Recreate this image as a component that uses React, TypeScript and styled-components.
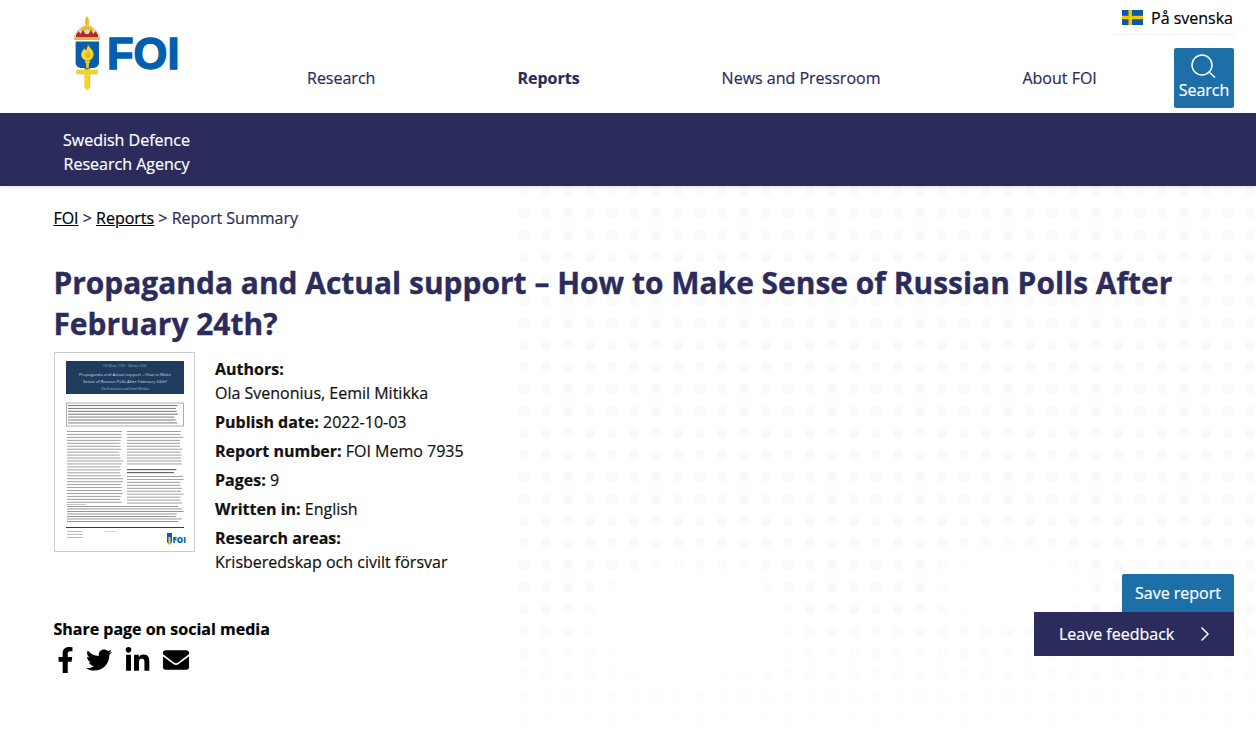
import React from "react";
import styled, { createGlobalStyle } from "styled-components";
import { FaFacebookF, FaTwitter, FaLinkedinIn, FaEnvelope } from "react-icons/fa";

const NAVY = "#2c2c5c";
const BLUE = "#1d6fa8";

const Global = createGlobalStyle`
  html, body { margin: 0; padding: 0; background: #fff; }
  body {
    font-family: "Open Sans", "Liberation Sans", sans-serif;
    font-size: 16px;
    line-height: 24px;
    color: #111;
    -webkit-text-stroke: 0.2px currentColor;
  }
  * { box-sizing: border-box; }
`;

const Page = styled.div`
  width: 1256px;
  height: 742px;
  overflow: hidden;
`;

const Header = styled.header`
  display: flex;
  height: 113px;
  padding: 0 22px 0 74px;
  background: #fff;
`;

const LogoBox = styled.a`
  display: block;
  flex: none;
  width: 106px;
  height: 74px;
  margin-top: 16px;
  svg { display: block; }
`;

const HeaderRight = styled.div`
  flex: 1;
  display: flex;
  flex-direction: column;
  align-items: flex-end;
`;

const LangLink = styled.a`
  display: flex;
  align-items: center;
  gap: 8px;
  height: 35px;
  width: 122px;
  padding: 4px 0 3px 10px;
  border-bottom: 1px solid #f0f0f0;
  color: #000;
  white-space: nowrap;
`;

const NavRow = styled.nav`
  align-self: stretch;
  display: flex;
  align-items: center;
  margin-top: 13px;
  padding-left: 127px;
`;

const NavLink = styled.a<{ $active?: boolean }>`
  margin-right: 142px;
  color: ${NAVY};
  font-weight: ${(p) => (p.$active ? 700 : 400)};
  white-space: nowrap;
  &:nth-child(4) { margin-right: 0; }
`;

const SearchButton = styled.button`
  margin-left: auto;
  width: 60px;
  height: 60px;
  padding: 6px 0 0;
  border: 0;
  border-radius: 2px;
  background: ${BLUE};
  color: #fff;
  font: 500 16px/24px "Open Sans", sans-serif;
  display: flex;
  flex-direction: column;
  align-items: center;
  svg { display: block; }
`;

const Band = styled.div`
  height: 73px;
  padding: 15px 0 0 63px;
  background: ${NAVY};
  color: #fff;
  box-shadow: 0 1px 3px rgba(0, 0, 0, 0.12);
  position: relative;
`;

const BandText = styled.div`
  width: 127px;
  text-align: center;
  white-space: nowrap;
  font-weight: 500;
`;

const Main = styled.main`
  height: 556px;
  padding: 20px 22px 0 54px;
  background-color: #fff;
  background-image:
    radial-gradient(ellipse 120px 70px at 690px 440px, #fff 70%, #fff0 100%),
    radial-gradient(ellipse 90px 50px at 1010px 400px, #fff 60%, #fff0 100%),
    linear-gradient(#fff0 75%, #fff 100%),
    linear-gradient(90deg, #fff 513px, #fff0 513px),
    radial-gradient(circle at 11px 11px, #fafafa 0, #fafafa 5px, #fff0 5.6px);
  background-size: 100% 100%, 100% 100%, 100% 100%, 100% 100%, 22px 22px;
  background-position: 0 0, 0 0, 0 0, 0 0, 513px -6px;
`;

const Crumbs = styled.div`
  color: ${NAVY};
  height: 24px;
  margin-left: -0.6px;
  a { color: #000; text-decoration: underline; }
`;

const Title = styled.h1`
  margin: 32px 0 8px -0.6px;
  font-size: 29.95px;
  line-height: 41px;
  font-weight: 700;
  color: ${NAVY};
  -webkit-text-stroke: 0.35px currentColor;
`;

const ReportRow = styled.section`
  display: flex;
  gap: 20px;
  align-items: flex-start;
`;

const Cover = styled.div`
  flex: none;
  width: 141px;
  height: 200px;
  border: 1px solid #ccc;
  background: #fff;
  svg { display: block; }
`;

const Details = styled.div`
  padding-top: 5px;
  color: #111;
`;

const Detail = styled.div`
  margin-bottom: 5px;
  &:last-child { margin-bottom: 0; }
  strong { font-weight: 700; }
`;

const FootRow = styled.div`
  display: flex;
  justify-content: space-between;
  align-items: flex-start;
`;

const Share = styled.div`
  padding-top: 43px;
  margin-left: -0.6px;
`;

const ShareTitle = styled.div`
  font-weight: 700;
  color: #000;
`;

const ShareIcons = styled.div`
  display: flex;
  align-items: center;
  gap: 12px;
  margin-top: 6px;
  margin-left: 3.6px;
  color: #000;
  height: 26px;
`;

const FacebookIcon = styled(FaFacebookF)`
  width: 17px;
  height: 26px;
`;

const Actions = styled.div`
  display: flex;
  flex-direction: column;
  align-items: flex-end;
`;

const SaveButton = styled.button`
  width: 112px;
  height: 38px;
  border: 0;
  border-radius: 2px 2px 0 0;
  background: ${BLUE};
  color: #fff;
  font: 500 16px/24px "Open Sans", sans-serif;
`;

const FeedbackButton = styled.button`
  width: 200px;
  height: 44px;
  border: 0;
  padding: 0 24px 0 25px;
  background: ${NAVY};
  color: #fff;
  font: 500 16px/24px "Open Sans", sans-serif;
  display: flex;
  align-items: center;
  justify-content: space-between;
`;

const Flag = () => (
  <svg width="21" height="15" viewBox="0 0 21 15">
    <rect width="21" height="15" fill="#0b5aa6" />
    <rect x="6.500" width="3.500" height="15" fill="#f6c700" />
    <rect y="5.800" width="21" height="3.400" fill="#f6c700" />
  </svg>
);

const Logo = () => (
  <svg width="106" height="74" viewBox="0 0 106 74">
    {/* sword */}
    <path d="M10.700 50h5.300v4h7.700v4H16v13.500L13.300 74l-2.600-2.500V58H2.700v-4h8z" fill="#f5d327" stroke="#d9b51a" strokeWidth=".4" />
    {/* crown tip */}
    <path d="M13 0c1.600 2.500 2.600 4.500 2.200 6.500l-.6 3.500h-3l-.6-3.500C10.600 4.500 11.500 2.500 13 0z" fill="#eebd2c" />
    {/* crown */}
    <path d="M3 15c2-4 7-6 10-6s8 2 10 6l3 4v5H0v-5z" fill="#dcd8ca" />
    <path d="M6 14c2-3 5-4.500 7-4.500S18 11 20 14l-2 1.500-5-2-5 2z" fill="#e3bb2e" />
    <path d="M2 19l2.500-4 2 3 2.500-4 2.500 4h3l2.500-4 2.500 4 2-3 2.500 4v2H2z" fill="#b52a25" />
    <rect x="0.500" y="21" width="25" height="3" fill="#e3bb2e" />
    {/* shield */}
    <path d="M1.600 25.500H25v21c0 3-2.500 5.500-6 5.500h-1.500c-2 0-3.500 1-4.200 2-.7-1-2.300-2-4.300-2H7.500C4 52 1.600 49.500 1.600 46.500z" fill="#0b5cab" />
    {/* torch */}
    <path d="M13.500 28c1 3 6 5.500 6 10.500 0 3.500-2.500 6-6 6s-6.300-2.500-6.300-6c0-2.700 1.800-4 3-6 1 .8 1.500 1.500 1.500 2.500.8-2 1.800-4 2.800-7z" fill="#f7d925" />
    <path d="M11.500 38c1-1.500 2-2 2.500-4 1 2 2.500 3 2.500 5s-1 3-3 3-2-2.500-2-4z" fill="#c9a91a" opacity=".6" />
    <path d="M10.500 44.500h6l-1.300 3h-3.400zM12 47.500h3l-.4 5h-2.200z" fill="#f3c81f" />
    {/* wordmark */}
    <text x="33" y="53" fontFamily="'Liberation Sans', sans-serif" fontWeight="700" fontSize="44" fill="#005fae" stroke="#005fae" strokeWidth="1.400" textLength="72.500" lengthAdjust="spacingAndGlyphs">FOI</text>
  </svg>
);

const SearchIcon = () => (
  <svg width="26" height="24" viewBox="0 0 26 24" fill="none" stroke="#fff" strokeWidth="1.500">
    <circle cx="11" cy="11" r="10" />
    <path d="M18 18l6 5.500" />
  </svg>
);

const Chevron = () => (
  <svg width="10" height="16" viewBox="0 0 10 16" fill="none" stroke="#fff" strokeWidth="1.500">
    <path d="M1.500 1.500L8 8l-6.500 6.500" />
  </svg>
);

const pseudo = (seed: number) => {
  const x = Math.sin(seed * 12.9898) * 43758.5453;
  return x - Math.floor(x);
};

const TextLines = ({ x, y, width, count, step = 2.95, h = 1, fill = "#a0a0a0", seed = 1 }: { x: number; y: number; width: number; count: number; step?: number; h?: number; fill?: string; seed?: number }) => (
  <g fill={fill}>
    {Array.from({ length: count }, (_, i) => (
      <rect key={i} x={x} y={y + i * step} width={width * (0.93 + 0.07 * pseudo(seed + i))} height={h} />
    ))}
  </g>
);

const CoverArt = () => (
  <svg width="139" height="198" viewBox="0 0 139 198">
    <rect x="11" y="8" width="118" height="33" fill="#1f3b5e" />
    <g fontFamily="'Open Sans', sans-serif" textAnchor="middle" fill="#cfd8e2" strokeWidth="0">
      <text x="70" y="14" fontSize="3" fill="#9fb0c2">FOI Memo 7935 · Oktober 2022</text>
      <text x="70" y="23" fontSize="4.200">Propaganda and Actual support – How to Make</text>
      <text x="70" y="30" fontSize="4.200">Sense of Russian Polls After February 24th?</text>
      <text x="70" y="37" fontSize="3.200" fill="#a9b7c6">Ola Svenonius and Eemil Mitikka</text>
    </g>
    <rect x="11.500" y="50" width="117" height="23" fill="#fff" stroke="#777" strokeWidth=".6" />
    <TextLines x={13} y={52} width={113} count={7} step={2.900} h={1} fill="#777" seed={3} />
    <TextLines x={12} y={78} width={56} count={25} fill="#a0a0a0" seed={20} />
    <TextLines x={72} y={78} width={57} count={12} fill="#a0a0a0" seed={60} />
    <TextLines x={72} y={116} width={50} count={2} step={3} h={1.200} fill="#666" seed={90} />
    <TextLines x={72} y={123} width={57} count={10} fill="#a0a0a0" seed={95} />
    <rect x="11" y="151" width="20" height=".5" fill="#888" />
    <TextLines x={12} y={153} width={117} count={7} step={2.500} h={.9} fill="#8a8a8a" seed={120} />
    <rect x="11" y="174" width="118" height="1" fill="#1f3b5e" />
    <TextLines x={12} y={178} width={16} count={3} step={3} h={.8} fill="#aaa" seed={140} />
    <rect x="50" y="178" width="12" height=".8" fill="#ccc" />
    <path d="M112 180h5v9l-2.500 3-2.500-3z" fill="#0b5cab" />
    <rect x="113.500" y="184" width="2" height="8" fill="#f5d327" />
    <text x="117.500" y="190" fontFamily="'Open Sans', sans-serif" fontWeight="800" fontSize="8" fill="#005fae" strokeWidth="0">FOI</text>
  </svg>
);

export default function App() {
  return (
    <Page>
      <Global />
      <Header>
        <LogoBox><Logo /></LogoBox>
        <HeaderRight>
          <LangLink><Flag />På svenska</LangLink>
          <NavRow>
            <NavLink>Research</NavLink>
            <NavLink $active>Reports</NavLink>
            <NavLink>News and Pressroom</NavLink>
            <NavLink>About FOI</NavLink>
            <SearchButton><SearchIcon />Search</SearchButton>
          </NavRow>
        </HeaderRight>
      </Header>
      <Band>
        <BandText>Swedish Defence<br />Research Agency</BandText>
      </Band>
      <Main>
        <Crumbs><a>FOI</a> &gt; <a>Reports</a> &gt; Report Summary</Crumbs>
        <Title>Propaganda and Actual support – How to Make Sense of Russian Polls After February 24th?</Title>
        <ReportRow>
          <Cover><CoverArt /></Cover>
          <Details>
            <Detail><strong>Authors:</strong><br />Ola Svenonius, Eemil Mitikka</Detail>
            <Detail><strong>Publish date:</strong> 2022-10-03</Detail>
            <Detail><strong>Report number:</strong> FOI Memo 7935</Detail>
            <Detail><strong>Pages:</strong> 9</Detail>
            <Detail><strong>Written in:</strong> English</Detail>
            <Detail><strong>Research areas:</strong><br />Krisberedskap och civilt försvar</Detail>
          </Details>
        </ReportRow>
        <FootRow>
          <Share>
            <ShareTitle>Share page on social media</ShareTitle>
            <ShareIcons>
              <FacebookIcon />
              <FaTwitter size={26} />
              <FaLinkedinIn size={27} />
              <FaEnvelope size={26} />
            </ShareIcons>
          </Share>
          <Actions>
            <SaveButton>Save report</SaveButton>
            <FeedbackButton>Leave feedback<Chevron /></FeedbackButton>
          </Actions>
        </FootRow>
      </Main>
    </Page>
  );
}
